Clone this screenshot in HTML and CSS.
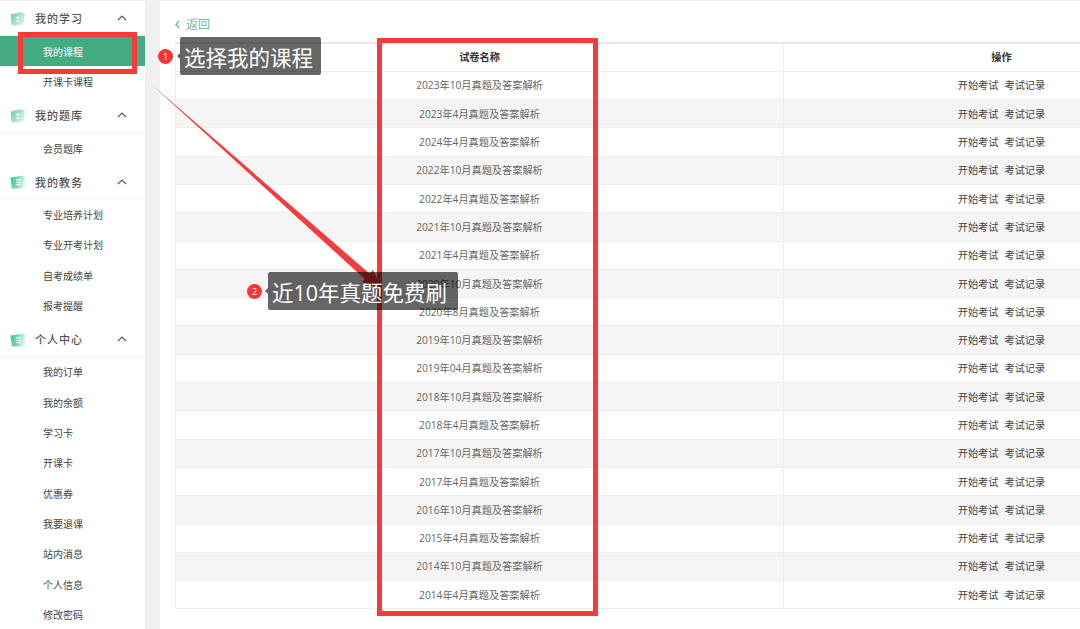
FILE: index.html
```html
<!DOCTYPE html>
<html lang="zh-CN">
<head>
<meta charset="utf-8">
<title>我的课程</title>
<link rel="stylesheet" href="styles.css">
</head>
<body>
<svg class="defs" width="0" height="0" aria-hidden="true">
  <defs>
    <linearGradient id="g1" x1="0" y1="0.1" x2="1" y2="0.7"><stop offset="0" stop-color="#66cdaa"/><stop offset="1" stop-color="#e2f5ee"/></linearGradient>
    <linearGradient id="g2" x1="0" y1="0" x2="1" y2="0.15"><stop offset="0" stop-color="#3cc598"/><stop offset="0.55" stop-color="#7cd8b9"/><stop offset="1" stop-color="#e4f7f0"/></linearGradient>
    <symbol id="i-person" viewBox="0 0 16 14">
      <path d="M1 2.2 L11.5 0.3 L15 2 L13.6 12.6 L3.2 13.6 L1.4 12 Z" fill="url(#g1)"/>
      <circle cx="7.7" cy="5.6" r="1.3" fill="#fff"/>
      <path d="M5.3 9.4 Q7.7 7 10.1 9.4 Z" fill="#fff"/>
    </symbol>
    <symbol id="i-note" viewBox="0 0 16 14">
      <path d="M0.4 2.6 L14 0.4 L15.4 1.6 L15.4 12.6 L14 13.6 L2 13.6 Z" fill="url(#g2)"/>
      <path d="M6 4.8 H11 M6 7.2 H11 M6 9.6 H11" stroke="#fff" stroke-width="1" fill="none"/>
    </symbol>
    <symbol id="i-up" viewBox="0 0 10 6">
      <path d="M1 5 L5 1 L9 5" fill="none" stroke="#555" stroke-width="1.1"/>
    </symbol>
  </defs>
</svg>
<div class="page">
  <aside class="side">
    <div class="head"><svg class="ico"><use href="#i-person"/></svg><span class="head-t">我的学习</span><svg class="up"><use href="#i-up"/></svg></div>
    <a class="item on">我的课程</a>
    <a class="item">开课卡课程</a>
    <div class="head"><svg class="ico"><use href="#i-person"/></svg><span class="head-t">我的题库</span><svg class="up"><use href="#i-up"/></svg></div>
    <a class="item">会员题库</a>
    <div class="head"><svg class="ico"><use href="#i-note"/></svg><span class="head-t">我的教务</span><svg class="up"><use href="#i-up"/></svg></div>
    <a class="item">专业培养计划</a>
    <a class="item">专业开考计划</a>
    <a class="item">自考成绩单</a>
    <a class="item">报考提醒</a>
    <div class="head"><svg class="ico"><use href="#i-note"/></svg><span class="head-t">个人中心</span><svg class="up"><use href="#i-up"/></svg></div>
    <a class="item">我的订单</a>
    <a class="item">我的余额</a>
    <a class="item">学习卡</a>
    <a class="item">开课卡</a>
    <a class="item">优惠券</a>
    <a class="item">我要退课</a>
    <a class="item">站内消息</a>
    <a class="item">个人信息</a>
    <a class="item">修改密码</a>
  </aside>
  <main class="main">
    <div class="back">
      <svg class="back-i" viewBox="0 0 6 10"><path d="M5 1 L1 5 L5 9" fill="none" stroke="#5fb399" stroke-width="1.4"/></svg>
      <span>返回</span>
    </div>
    <table class="tbl">
      <colgroup><col class="c1"><col class="c2"></colgroup>
      <thead><tr><th>试卷名称</th><th>操作</th></tr></thead>
      <tbody>
        <tr><td>2023年10月真题及答案解析</td><td class="ops"><span>开始考试</span><span>考试记录</span></td></tr>
        <tr><td>2023年4月真题及答案解析</td><td class="ops"><span>开始考试</span><span>考试记录</span></td></tr>
        <tr><td>2024年4月真题及答案解析</td><td class="ops"><span>开始考试</span><span>考试记录</span></td></tr>
        <tr><td>2022年10月真题及答案解析</td><td class="ops"><span>开始考试</span><span>考试记录</span></td></tr>
        <tr><td>2022年4月真题及答案解析</td><td class="ops"><span>开始考试</span><span>考试记录</span></td></tr>
        <tr><td>2021年10月真题及答案解析</td><td class="ops"><span>开始考试</span><span>考试记录</span></td></tr>
        <tr><td>2021年4月真题及答案解析</td><td class="ops"><span>开始考试</span><span>考试记录</span></td></tr>
        <tr><td>2020年10月真题及答案解析</td><td class="ops"><span>开始考试</span><span>考试记录</span></td></tr>
        <tr><td>2020年8月真题及答案解析</td><td class="ops"><span>开始考试</span><span>考试记录</span></td></tr>
        <tr><td>2019年10月真题及答案解析</td><td class="ops"><span>开始考试</span><span>考试记录</span></td></tr>
        <tr><td>2019年04月真题及答案解析</td><td class="ops"><span>开始考试</span><span>考试记录</span></td></tr>
        <tr><td>2018年10月真题及答案解析</td><td class="ops"><span>开始考试</span><span>考试记录</span></td></tr>
        <tr><td>2018年4月真题及答案解析</td><td class="ops"><span>开始考试</span><span>考试记录</span></td></tr>
        <tr><td>2017年10月真题及答案解析</td><td class="ops"><span>开始考试</span><span>考试记录</span></td></tr>
        <tr><td>2017年4月真题及答案解析</td><td class="ops"><span>开始考试</span><span>考试记录</span></td></tr>
        <tr><td>2016年10月真题及答案解析</td><td class="ops"><span>开始考试</span><span>考试记录</span></td></tr>
        <tr><td>2015年4月真题及答案解析</td><td class="ops"><span>开始考试</span><span>考试记录</span></td></tr>
        <tr><td>2014年10月真题及答案解析</td><td class="ops"><span>开始考试</span><span>考试记录</span></td></tr>
        <tr><td>2014年4月真题及答案解析</td><td class="ops"><span>开始考试</span><span>考试记录</span></td></tr>
      </tbody>
    </table>
  </main>
  <div class="box box-a"></div>
  <div class="box box-b"></div>
  <svg class="arrow" viewBox="0 0 1080 629">
    <path d="M151 84 L369.7 273.8 L373 270 L382.6 289 L362 282 L364.7 279 Z" fill="#f53b3b"/>
  </svg>
  <div class="tip tip-a"><b class="dot">1</b><span class="bubble">选择我的课程</span></div>
  <div class="tip tip-b"><b class="dot">2</b><span class="bubble">近10年真题免费刷</span></div>
</div>
</body>
</html>
```
FILE: styles.css
```css
* { box-sizing: border-box; }
html, body { margin: 0; height: 100%; overflow: hidden; }
body { background: #f0f0f0; font-family: "Open Sans", "Noto Sans CJK SC", sans-serif; }
.defs { position: absolute; }
.page { position: relative; width: 1080px; height: 629px; overflow: hidden; display: flex; gap: 15px; padding-top: 1px; }
.side { width: 145px; flex: none; height: 700px; background: #fff; }
.head { height: 36.2px; display: flex; align-items: center; padding: 2px 18px 0 10px; border-bottom: 1px solid #f1f1f1; font-size: 11px; color: #555; }
.head:first-child { height: 35.2px; padding-top: 0; }
.ico { width: 16px; height: 14px; flex: none; margin-top: 1px; }
.head-t { margin-left: 9px; flex: 1; letter-spacing: 1px; font-weight: 500; }
.up { width: 10px; height: 6px; flex: none; }
.item { display: flex; align-items: center; height: 30.3px; padding-left: 43px; font-size: 10px; color: #444; }
.item.on { background: #45ab83; color: #fff; }
.main { width: 920px; flex: none; height: 628px; background: #fff; padding: 0 0 0 15px; }
.back { height: 41px; display: flex; align-items: center; padding-top: 5px; font-size: 12px; color: #6dbba3; }
.back-i { width: 5px; height: 9px; margin-right: 6px; }
.tbl { width: 1044px; border-collapse: collapse; table-layout: fixed; font-size: 10.2px; color: #666; border: 1px solid #eee; }
.c1 { width: 608px; }
.c2 { width: 436px; }
th, td { height: 28.3px; padding: 0 0 1px; text-align: center; border-bottom: 1px solid #eee; border-left: 1px solid #eee; font-weight: 400; }
th { color: #333; font-weight: 700; border-top: 2px solid #e9e9e9; }
tbody tr:nth-child(even) { background: #f5f5f5; }
.ops { color: #444; }
.ops span + span { margin-left: 6px; }
.box { position: absolute; border: 5px solid #f73b3b; }
.box-a { left: 18px; top: 32px; width: 119px; height: 42px; }
.box-b { left: 377px; top: 38px; width: 221px; height: 578px; }
.arrow { position: absolute; left: 0; top: 0; width: 1080px; height: 629px; }
.tip { position: absolute; display: flex; align-items: center; }
.tip-a { left: 158px; top: 37px; }
.tip-b { left: 247px; top: 272px; }
.dot { width: 15px; height: 15px; border-radius: 50%; background: #f7343a; color: #fff; font-size: 9px; font-weight: 400; display: flex; align-items: center; justify-content: center; }
.bubble { position: relative; margin-left: 6px; height: 38px; padding: 0 8px 0 4px; display: flex; align-items: center; background: rgba(0, 0, 0, 0.6); border-radius: 2px; color: #fff; font-size: 21.5px; white-space: nowrap; }
.tip-a .bubble { margin-left: 7px; }
.tip-b .bubble { padding-right: 11px; }
.bubble::before { content: ""; position: absolute; left: -6px; top: 16px; width: 0; height: 0; border: 3px solid transparent; border-right-color: rgba(0, 0, 0, 0.6); }
```
